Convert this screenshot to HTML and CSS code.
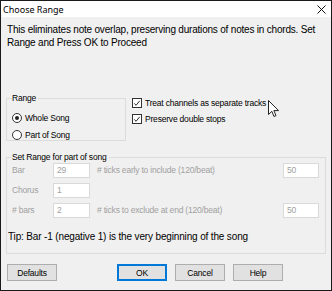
FILE: index.html
```html
<!DOCTYPE html>
<html>
<head>
<meta charset="utf-8">
<link rel="stylesheet" href="styles.css">
</head>
<body>
<div class="window">
  <div class="titlebar">
    <span class="title">Choose Range</span>
    <svg class="close" width="9" height="9" viewBox="0 0 9 9"><path d="M0.5 0.5L8.5 8.5M8.5 0.5L0.5 8.5" stroke="#111" stroke-width="1" fill="none"/></svg>
  </div>
  <div class="content">
    <p class="desc">This eliminates note overlap, preserving durations of notes in chords. Set Range and Press OK to Proceed</p>
    <div class="toprow">
      <fieldset class="group range">
        <legend>Range</legend>
        <label class="radio-row"><span class="radio on"></span>Whole Song</label>
        <label class="radio-row"><span class="radio"></span>Part of Song</label>
      </fieldset>
      <div class="checks">
        <label class="check-row"><span class="check"><svg width="9" height="9" viewBox="0 0 9 9"><path d="M1.5 4.5L3.5 6.5L7.5 1.5" stroke="#222" stroke-width="1.1" fill="none"/></svg></span>Treat channels as separate tracks</label>
        <label class="check-row"><span class="check"><svg width="9" height="9" viewBox="0 0 9 9"><path d="M1.5 4.5L3.5 6.5L7.5 1.5" stroke="#222" stroke-width="1.1" fill="none"/></svg></span>Preserve double stops</label>
      </div>
    </div>
    <fieldset class="group setrange">
      <legend>Set Range for part of song</legend>
      <div class="frow">
        <span class="flabel">Bar</span><span class="input">29</span>
        <span class="flabel2"># ticks early to include (120/beat)</span><span class="input right">50</span>
      </div>
      <div class="frow">
        <span class="flabel">Chorus</span><span class="input">1</span>
      </div>
      <div class="frow">
        <span class="flabel"># bars</span><span class="input">2</span>
        <span class="flabel2"># ticks to exclude at end (120/beat)</span><span class="input right">50</span>
      </div>
      <p class="tip">Tip: Bar -1 (negative 1) is the very beginning of the song</p>
    </fieldset>
    <div class="buttons">
      <button class="btn">Defaults</button>
      <span class="spacer"></span>
      <button class="btn default">OK</button>
      <button class="btn">Cancel</button>
      <button class="btn">Help</button>
    </div>
  </div>
  <svg class="cursor" width="12" height="18" viewBox="0 0 12 18"><path d="M0.5 0.5L0.5 14.5L3.8 11.3L6 16.5L8 15.6L5.9 10.6L10.5 10.6Z" fill="#fff" stroke="#222" stroke-width="1" stroke-linejoin="miter"/></svg>
</div>
</body>
</html>
```

FILE: styles.css
```css
* { box-sizing: border-box; }
html, body { margin: 0; padding: 0; }
body { width: 332px; height: 291px; overflow: hidden; background: #fff; }
.window {
  position: relative;
  width: 332px; height: 291px;
  border: 1px solid #1a1a1a;
  background: #f0f0f0;
  font-family: "Liberation Sans", Arial, sans-serif;
  color: #000;
  display: flex; flex-direction: column;
}
.titlebar {
  height: 16px; background: #fff;
  display: flex; align-items: center; justify-content: space-between;
  padding: 0 5px 0 2px;
}
.title { font-family: "Noto Sans", "Liberation Sans", sans-serif; font-size: 9px; color: #000; }
.close { display: block; }
.content { flex: 1; display: flex; flex-direction: column; padding: 0 0 0 5px; }
.desc { margin: 6px 8px 0 1px; font-size: 10px; line-height: 13px; letter-spacing: -0.2px; }
.toprow { display: flex; margin-top: 44px; }
.group {
  margin: 0; padding: 0; border: 1px solid #dcdcdc; border-radius: 0;
  min-width: 0;
}
.group legend { font-size: 8.5px; letter-spacing: -0.2px; padding: 0 2px 0 0; margin-left: 0; line-height: 10px; color: #000; }
.range { width: 120px; height: 48px; padding: 6px 0 0 5px; }
.radio-row { display: flex; align-items: center; font-size: 8.5px; letter-spacing: -0.2px; height: 17px; gap: 3px; }
.radio {
  width: 10px; height: 10px; border-radius: 50%; border: 1px solid #333; background: #fff;
  display: flex; align-items: center; justify-content: center;
}
.radio.on::after { content: ""; width: 4px; height: 4px; border-radius: 50%; background: #222; }
.checks { display: flex; flex-direction: column; margin-left: 6px; margin-top: 2px; }
.check-row { display: flex; align-items: center; font-size: 8.5px; letter-spacing: -0.2px; height: 16px; gap: 3px; }
.check { width: 10px; height: 10px; border: 1px solid #333; background: #fff; display: flex; align-items: center; justify-content: center; }
.check svg { display: block; }
.setrange { margin-top: 11px; width: 320px; height: 102px; padding: 0 0 0 5px; }
.frow { display: flex; align-items: center; height: 20px; font-size: 8.5px; letter-spacing: -0.2px; color: #a0a0a0; }
.frow:first-of-type { margin-top: -2px; }
.flabel { width: 41px; }
.flabel2 { width: 186px; margin-left: 7px; }
.input {
  width: 37px; height: 15px; background: #fff; border: 1px solid #d9d9d9;
  padding-left: 3px; line-height: 13px; color: #a0a0a0; font-size: 8.5px;
}
.input.right { width: 36px; }
.tip { margin: 11px 0 0 -4px; font-size: 10px; letter-spacing: -0.15px; color: #000; }
.buttons { display: flex; margin-top: 10px; padding-left: 1px; gap: 8px; }
.spacer { width: 44px; }
.btn {
  width: 50px; height: 17px; padding: 0; margin: 0;
  background: #e1e1e1; border: 1px solid #adadad; border-radius: 0;
  font-family: "Liberation Sans", Arial, sans-serif; font-size: 8.5px; letter-spacing: -0.2px; color: #000;
}
.btn.default { border: 2px solid #0078d7; }
.cursor { position: absolute; left: 267px; top: 99px; }
```
